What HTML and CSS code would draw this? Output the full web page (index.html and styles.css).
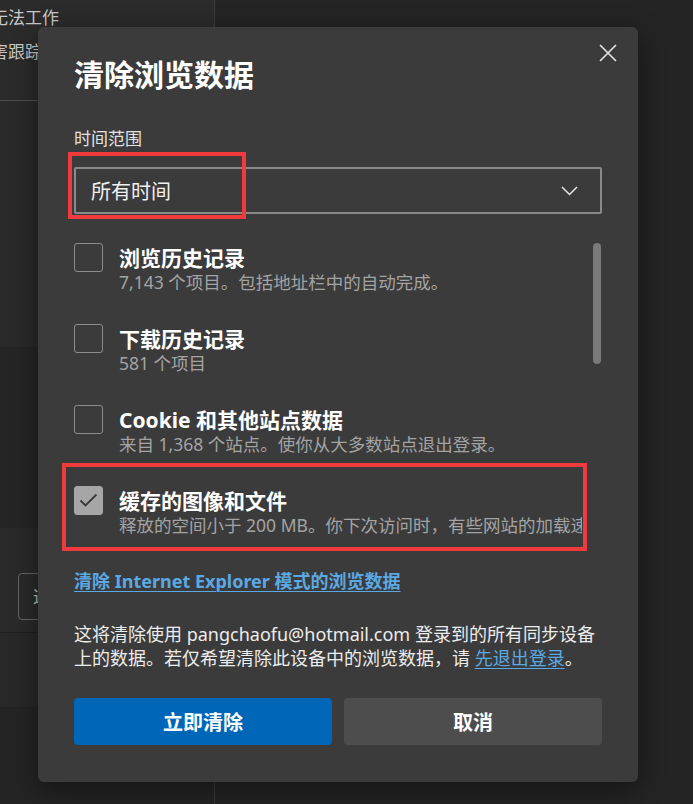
FILE: index.html
```html
<!DOCTYPE html>
<html lang="zh-CN">
<head>
<meta charset="utf-8">
<title>清除浏览数据</title>
<link rel="stylesheet" href="styles.css">
</head>
<body>
<div class="page">
  <aside class="side">
    <div class="side-top">
      <p class="side-line">无法工作</p>
      <p class="side-line">害跟踪</p>
    </div>
    <div class="side-sec s1"></div>
    <div class="side-sec s2"></div>
    <div class="side-sec s3"><div class="fake-input">这</div></div>
    <div class="side-sec s4"></div>
    <div class="side-sec s5"></div>
  </aside>
  <main class="main-bg"></main>
</div>

<div class="dialog" role="dialog" aria-label="清除浏览数据">
  <button class="close" aria-label="关闭">
    <svg width="18" height="18" viewBox="0 0 18 18"><path d="M1 1L17 17M17 1L1 17" stroke="#e8e8e8" stroke-width="1.6" fill="none"/></svg>
  </button>
  <h1 class="title">清除浏览数据</h1>
  <div class="label">时间范围</div>
  <div class="select">
    <span>所有时间</span>
    <svg width="17" height="10" viewBox="0 0 17 10"><path d="M1 1L8.5 8.5L16 1" stroke="#e8e8e8" stroke-width="1.5" fill="none"/></svg>
  </div>

  <div class="list">
    <div class="items">
      <div class="item">
        <span class="box"></span>
        <div class="text">
          <div class="item-title">浏览历史记录</div>
          <div class="item-sub">7,143 个项目。包括地址栏中的自动完成。</div>
        </div>
      </div>
      <div class="item">
        <span class="box"></span>
        <div class="text">
          <div class="item-title">下载历史记录</div>
          <div class="item-sub">581 个项目</div>
        </div>
      </div>
      <div class="item">
        <span class="box"></span>
        <div class="text">
          <div class="item-title">Cookie 和其他站点数据</div>
          <div class="item-sub">来自 1,368 个站点。使你从大多数站点退出登录。</div>
        </div>
      </div>
      <div class="item">
        <span class="box checked">
          <svg width="19" height="15" viewBox="0 0 19 15"><path d="M1.5 7.5L6.5 12.5L17.5 1.5" stroke="#3a3a3a" stroke-width="1.8" fill="none"/></svg>
        </span>
        <div class="text">
          <div class="item-title">缓存的图像和文件</div>
          <div class="item-sub">释放的空间小于 200 MB。你下次访问时，有些网站的加载速度可能会更慢。</div>
        </div>
      </div>
    </div>
    <div class="scrollbar"><div class="thumb"></div></div>
  </div>

  <a class="ie-link" href="#">清除 Internet Explorer 模式的浏览数据</a>

  <p class="note">这将清除使用 pangchaofu@hotmail.com 登录到的所有同步设备上的数据。若仅希望清除此设备中的浏览数据，请 <a href="#">先退出登录</a>。</p>

  <div class="actions">
    <button class="btn primary">立即清除</button>
    <button class="btn secondary">取消</button>
  </div>

  <div class="mark mark-1"></div>
  <div class="mark mark-2"></div>
</div>
</body>
</html>
```

FILE: styles.css
```css
* { box-sizing: border-box; }

body {
  margin: 0;
  width: 693px;
  height: 804px;
  overflow: hidden;
  position: relative;
  background: #242424;
  font-family: "Noto Sans", "Noto Sans CJK SC", sans-serif;
}

.page {
  display: flex;
  height: 804px;
}

.side {
  width: 215px;
  border-right: 1px solid #3c3c3c;
  display: flex;
  flex-direction: column;
}

.side-top {
  height: 101px;
  padding-top: 1px;
  background: #2b2b2b;
  border-bottom: 1px solid #505050;
  overflow: hidden;
}

.side-line {
  margin: 0 0 0 -9px;
  font-size: 17px;
  line-height: 34px;
  color: #c8c8c8;
  white-space: nowrap;
}

.s1 { height: 246px; background: #2a2a2a; }
.s2 { height: 181px; background: #252525; }
.s3 { height: 105px; background: #2a2a2a; border-bottom: 1px solid #1e1e1e; padding: 45px 0 0 18px; }
.s4 { height: 74px; background: #282828; }
.s5 { flex: 1; background: #242424; }

.fake-input {
  width: 90px;
  height: 47px;
  border: 1px solid #666;
  border-radius: 4px;
  padding-left: 14px;
  font-size: 17px;
  line-height: 45px;
  color: #bdbdbd;
}

.main-bg {
  flex: 1;
  background: #242424;
}

.dialog {
  position: absolute;
  left: 38px;
  top: 27px;
  width: 600px;
  height: 755px;
  padding: 28px 36px 37px;
  background: #3b3b3b;
  border-radius: 6px;
  box-shadow: 0 8px 28px rgba(0, 0, 0, 0.45);
  color: #fff;
}

.close {
  position: absolute;
  top: 17px;
  right: 21px;
  width: 18px;
  height: 18px;
  padding: 0;
  border: 0;
  background: none;
  display: block;
}
.close svg { display: block; }

.title {
  margin: 0;
  font-size: 30px;
  line-height: 40px;
  font-weight: 700;
  color: #fff;
}

.label {
  margin-top: 33px;
  font-size: 17px;
  line-height: 22px;
  color: #e2e2e2;
}

.select {
  margin-top: 17px;
  height: 47px;
  border: 2px solid #8a8a8a;
  border-radius: 2px;
  display: flex;
  align-items: center;
  justify-content: space-between;
  padding: 0 22px 0 15px;
  font-size: 20px;
  color: #f0f0f0;
}
.select svg { display: block; }

.list {
  margin-top: 29px;
  height: 305px;
  display: flex;
  justify-content: space-between;
}

.items {
  width: 508px;
  overflow: hidden;
  display: flex;
  flex-direction: column;
  gap: 30px;
}

.item {
  display: flex;
  gap: 16px;
  flex-shrink: 0;
}

.box {
  flex-shrink: 0;
  width: 29px;
  height: 29px;
  border: 1px solid #8c8c8c;
  border-radius: 3px;
  display: flex;
  align-items: center;
  justify-content: center;
}
.box.checked {
  background: #a6a6a6;
  border-color: #a6a6a6;
}
.box svg { display: block; }

.text {
  padding-top: 2px;
  min-width: 0;
}

.item-title {
  font-size: 21px;
  line-height: 26px;
  font-weight: 700;
  color: #fff;
  white-space: nowrap;
}

.item-sub {
  font-size: 17.5px;
  line-height: 23px;
  color: #a3a3a3;
  white-space: nowrap;
}

.scrollbar {
  width: 8px;
  margin-right: 1px;
}
.thumb {
  height: 121px;
  border-radius: 4px;
  background: #7a7a7a;
}

.ie-link {
  display: inline-block;
  margin-top: 21px;
  font-size: 18px;
  line-height: 24px;
  font-weight: 700;
  color: #5aa9e4;
  text-decoration: underline;
  text-decoration-thickness: 1px;
  text-underline-offset: 3px;
}

.note {
  margin: 29px 0 0;
  font-size: 18px;
  line-height: 24px;
  color: #ececec;
}
.note a {
  color: #5aa9e4;
  text-decoration: underline;
  text-decoration-thickness: 1px;
  text-underline-offset: 3px;
}

.actions {
  margin-top: 28px;
  display: flex;
  gap: 12px;
}

.btn {
  flex: 1;
  height: 47px;
  border: 0;
  border-radius: 4px;
  font-family: inherit;
  font-size: 20px;
  font-weight: 700;
  color: #fff;
}
.btn.primary { background: #0067b8; }
.btn.secondary { background: #4d4d4d; }

.mark {
  position: absolute;
  border: 4px solid #f03a3d;
  pointer-events: none;
}
.mark-1 { left: 30px; top: 125px; width: 178px; height: 67px; }
.mark-2 { left: 24px; top: 436px; width: 525px; height: 88px; }
```
